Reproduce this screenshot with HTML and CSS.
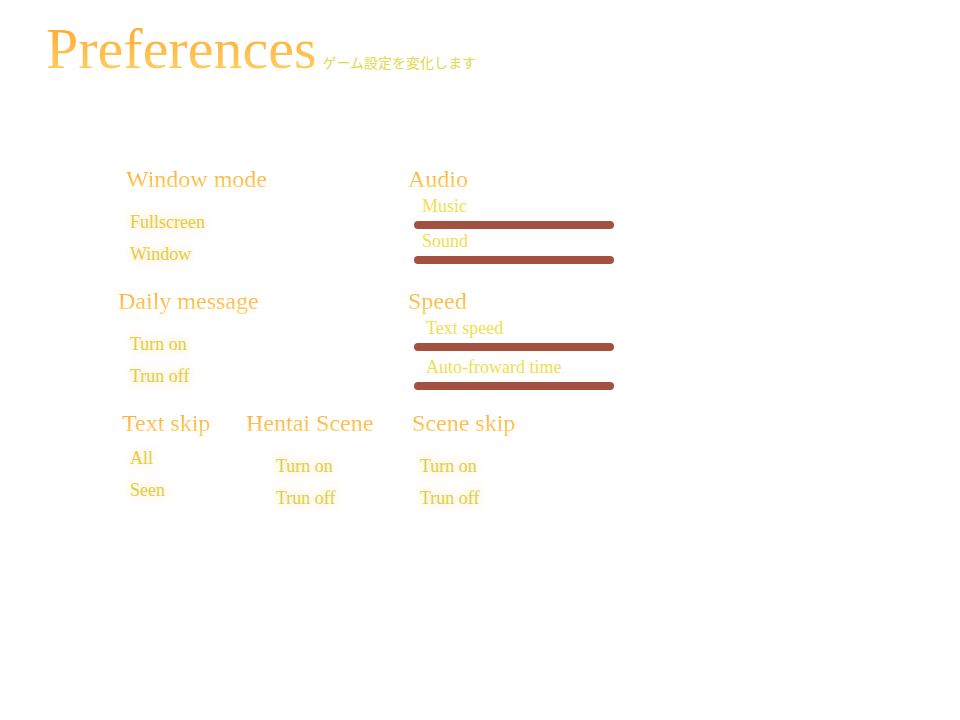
FILE: index.html
```html
<!DOCTYPE html>
<html lang="en">
<head>
<meta charset="utf-8">
<title>Preferences</title>
<link rel="stylesheet" href="styles.css">
</head>
<body>
<header class="header">
  <h1 class="title">Preferences</h1>
  <p class="subtitle" lang="ja">ゲーム設定を変化します</p>
</header>
<main class="prefs">
  <section class="group wide">
    <h2 class="heading inset-m">Window mode</h2>
    <div class="options">
      <button class="option" type="button">Fullscreen</button>
      <button class="option" type="button">Window</button>
    </div>
  </section>
  <section class="group">
    <h2 class="heading">Audio</h2>
    <div class="sliders">
      <label class="label" for="music">Music</label>
      <input class="slider" id="music" type="range">
      <label class="label" for="sound">Sound</label>
      <input class="slider" id="sound" type="range">
    </div>
  </section>
  <section class="group wide">
    <h2 class="heading">Daily message</h2>
    <div class="options">
      <button class="option" type="button">Turn on</button>
      <button class="option" type="button">Trun off</button>
    </div>
  </section>
  <section class="group">
    <h2 class="heading">Speed</h2>
    <div class="sliders loose">
      <label class="label" for="text-speed">Text speed</label>
      <input class="slider" id="text-speed" type="range">
      <label class="label" for="auto-time">Auto-froward time</label>
      <input class="slider" id="auto-time" type="range">
    </div>
  </section>
  <section class="group">
    <h2 class="heading inset-s">Text skip</h2>
    <div class="options tight">
      <button class="option" type="button">All</button>
      <button class="option" type="button">Seen</button>
    </div>
  </section>
  <section class="group">
    <h2 class="heading">Hentai Scene</h2>
    <div class="options deep">
      <button class="option" type="button">Turn on</button>
      <button class="option" type="button">Trun off</button>
    </div>
  </section>
  <section class="group">
    <h2 class="heading inset-s">Scene skip</h2>
    <div class="options">
      <button class="option" type="button">Turn on</button>
      <button class="option" type="button">Trun off</button>
    </div>
  </section>
</main>
</body>
</html>
```

FILE: styles.css
```css
* {
  box-sizing: border-box;
}

body {
  margin: 0;
  background: #fff;
  font-family: "Liberation Serif", "Noto Sans CJK JP", serif;
  font-size: 18px;
}

h1, h2, p {
  margin: 0;
  font-weight: 400;
}

.header {
  display: flex;
  align-items: baseline;
  gap: 6px;
  padding: 15px 46px 0;
}

.title,
.heading {
  background: linear-gradient(#ffac34 20%, #ffcf63 85%);
  -webkit-background-clip: text;
  background-clip: text;
  color: transparent;
}

.title {
  font-size: 58px;
  line-height: 68px;
}

.subtitle {
  font-size: 14px;
  line-height: 20px;
  color: #e3d74a;
}

.prefs {
  display: grid;
  grid-template-columns: 128fr 162fr 552fr;
  row-gap: 17px;
  padding: 82px 0 40px 118px;
}

.wide {
  grid-column: span 2;
}

.heading {
  font-size: 24px;
  line-height: 28px;
  white-space: nowrap;
}

.inset-s {
  padding-left: 4px;
}

.inset-m {
  padding-left: 8px;
}

.options {
  display: flex;
  flex-direction: column;
  align-items: flex-start;
  padding: 13px 0 0 12px;
}

.options.tight {
  padding-top: 5px;
}

.options.deep {
  padding-left: 30px;
}

.option {
  padding: 0;
  border: 0;
  background: none;
  font: inherit;
  line-height: 32px;
  color: #e0cf3e;
  text-shadow: 0 0 10px rgba(255, 190, 100, 0.6);
  cursor: pointer;
}

.sliders {
  display: flex;
  flex-direction: column;
  align-items: flex-start;
  padding-top: 1px;
}

.label {
  padding-left: 14px;
  line-height: 24px;
  color: #efe04c;
}

.loose .label {
  padding-left: 18px;
}

.slider {
  -webkit-appearance: none;
  appearance: none;
  width: 200px;
  height: 8px;
  margin: 3px 0 0 6px;
  border-radius: 4px;
  background: #a35041;
}

.slider::-webkit-slider-thumb {
  -webkit-appearance: none;
  width: 8px;
  height: 8px;
  background: transparent;
}

.loose .slider:not(:last-child) {
  margin-bottom: 4px;
}
```
